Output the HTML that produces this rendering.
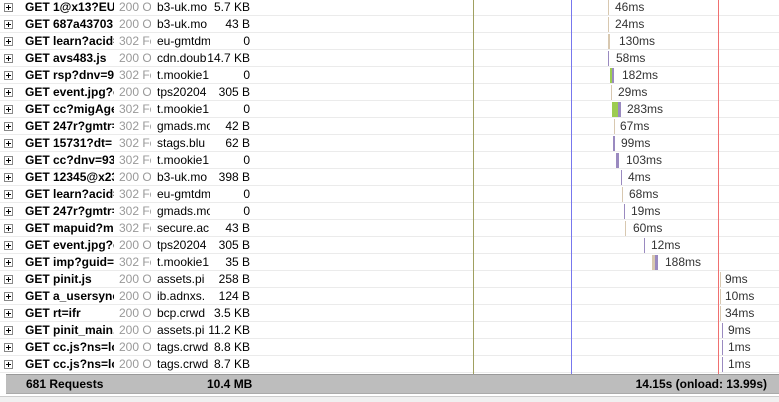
<!DOCTYPE html><html><head><style>
body{margin:0;width:779px;height:401px;overflow:hidden;background:#fff;font-family:"Liberation Sans",sans-serif;font-size:12px;color:#000;position:relative}
.r{position:absolute;left:0;width:779px;height:16px;border-bottom:1px solid #ebebeb}
.r span{position:absolute;top:1px;white-space:nowrap;overflow:hidden}
.ex{position:absolute;left:4px;top:4px;width:7px;height:7px;border:1px solid #888;background:#fff}
.ex:before{content:"";position:absolute;left:1px;top:3px;width:5px;height:1px;background:#000}
.ex:after{content:"";position:absolute;left:3px;top:1px;width:1px;height:5px;background:#000}
.n{left:25px;width:89px;font-weight:bold}
.s{left:119px;width:32px;color:#999}
.d{left:157px;width:53px;color:#000}
.z{left:200px;width:50px;text-align:right}
.b{position:absolute;top:1px;height:15px}
.t{color:#333}
.vl{position:absolute;top:0;height:374px;width:1px}
</style></head><body>
<div id="rows"></div>
<div class="vl" style="left:473px;background:#a0a060"></div>
<div class="vl" style="left:571px;background:#7777ee"></div>
<div class="vl" style="left:718px;background:#f07070"></div>
<div style="position:absolute;left:6px;top:374px;width:773px;height:18px;background:#bdbdbd;border-top:1px solid #999;border-bottom:1px solid #aaa;font-weight:bold;font-size:12px">
<span style="position:absolute;left:20px;top:2px">681 Requests</span>
<span style="position:absolute;left:201px;top:2px">10.4 MB</span>
<span style="position:absolute;right:12px;top:2px">14.15s (onload: 13.99s)</span></div>
<div style="position:absolute;left:0;top:396px;width:779px;height:5px;background:#f0f0f0;border-top:1px solid #ccc"></div>
<script>
var d=[["GET 1@x13?EUB","200 O","b3-uk.mo","5.7 KB",[[608,1,"#d8c8b0"]],615,"46ms"],
["GET 687a43703","200 O","b3-uk.mo","43 B",[[608,1,"#d8c8b0"]],615,"24ms"],
["GET learn?acid=","302 Fo","eu-gmtdm","0",[[608,2,"#d8c8b0"]],619,"130ms"],
["GET avs483.js","200 O","cdn.doub","14.7 KB",[[608,1,"#9a8ac0"]],616,"58ms"],
["GET rsp?dnv=93","302 Fo","t.mookie1","0",[[610,2,"#9ccc50"],[612,2,"#9a8ac0"]],622,"182ms"],
["GET event.jpg?c","200 O","tps20204","305 B",[[611,1,"#d8c8b0"]],618,"29ms"],
["GET cc?migAger","302 Fo","t.mookie1","0",[[612,6,"#9ccc50"],[618,3,"#9a8ac0"]],627,"283ms"],
["GET 247r?gmtr=","302 Fo","gmads.mo","42 B",[[614,1,"#d8c8b0"]],620,"67ms"],
["GET 15731?dt=","302 Fo","stags.blu","62 B",[[613,2,"#9a8ac0"]],621,"99ms"],
["GET cc?dnv=93","302 Fo","t.mookie1","0",[[616,3,"#9a8ac0"]],626,"103ms"],
["GET 12345@x23","200 O","b3-uk.mo","398 B",[[621,1,"#9a8ac0"]],628,"4ms"],
["GET learn?acid=","302 Fo","eu-gmtdm","0",[[622,1,"#d8c8b0"]],629,"68ms"],
["GET 247r?gmtr=","302 Fo","gmads.mo","0",[[624,1,"#9a8ac0"]],631,"19ms"],
["GET mapuid?me","302 Fo","secure.ac","43 B",[[625,1,"#d8c8b0"]],633,"60ms"],
["GET event.jpg?c","200 O","tps20204","305 B",[[644,1,"#9a8ac0"]],651,"12ms"],
["GET imp?guid=9","302 Fo","t.mookie1","35 B",[[652,3,"#d8c8b0"],[655,3,"#9a8ac0"]],665,"188ms"],
["GET pinit.js","200 O","assets.pi","258 B",[[720,1,"#d8c8b0"]],725,"9ms"],
["GET a_usersync","200 O","ib.adnxs.","124 B",[[720,1,"#d8c8b0"]],725,"10ms"],
["GET rt=ifr","200 O","bcp.crwd","3.5 KB",[[720,1,"#d8c8b0"]],725,"34ms"],
["GET pinit_main.","200 O","assets.pi","11.2 KB",[[722,1,"#9a8ac0"]],728,"9ms"],
["GET cc.js?ns=lo","200 O","tags.crwd","8.8 KB",[[722,1,"#9a8ac0"]],728,"1ms"],
["GET cc.js?ns=lo","200 O","tags.crwd","8.7 KB",[[722,1,"#9a8ac0"]],728,"1ms"]];
var h="";d.forEach(function(r,i){h+='<div class="r" style="top:'+(17*i-1)+'px"><div class="ex"></div><span class="n">'+r[0]+'</span><span class="s">'+r[1]+'</span><span class="d">'+r[2]+'</span><span class="z">'+r[3]+'</span>';
r[4].forEach(function(b){h+='<div class="b" style="left:'+b[0]+'px;width:'+b[1]+'px;background:'+b[2]+'"></div>'});
h+='<span class="t" style="left:'+r[5]+'px">'+r[6]+'</span></div>'});
document.getElementById("rows").innerHTML=h;
</script></body></html>
